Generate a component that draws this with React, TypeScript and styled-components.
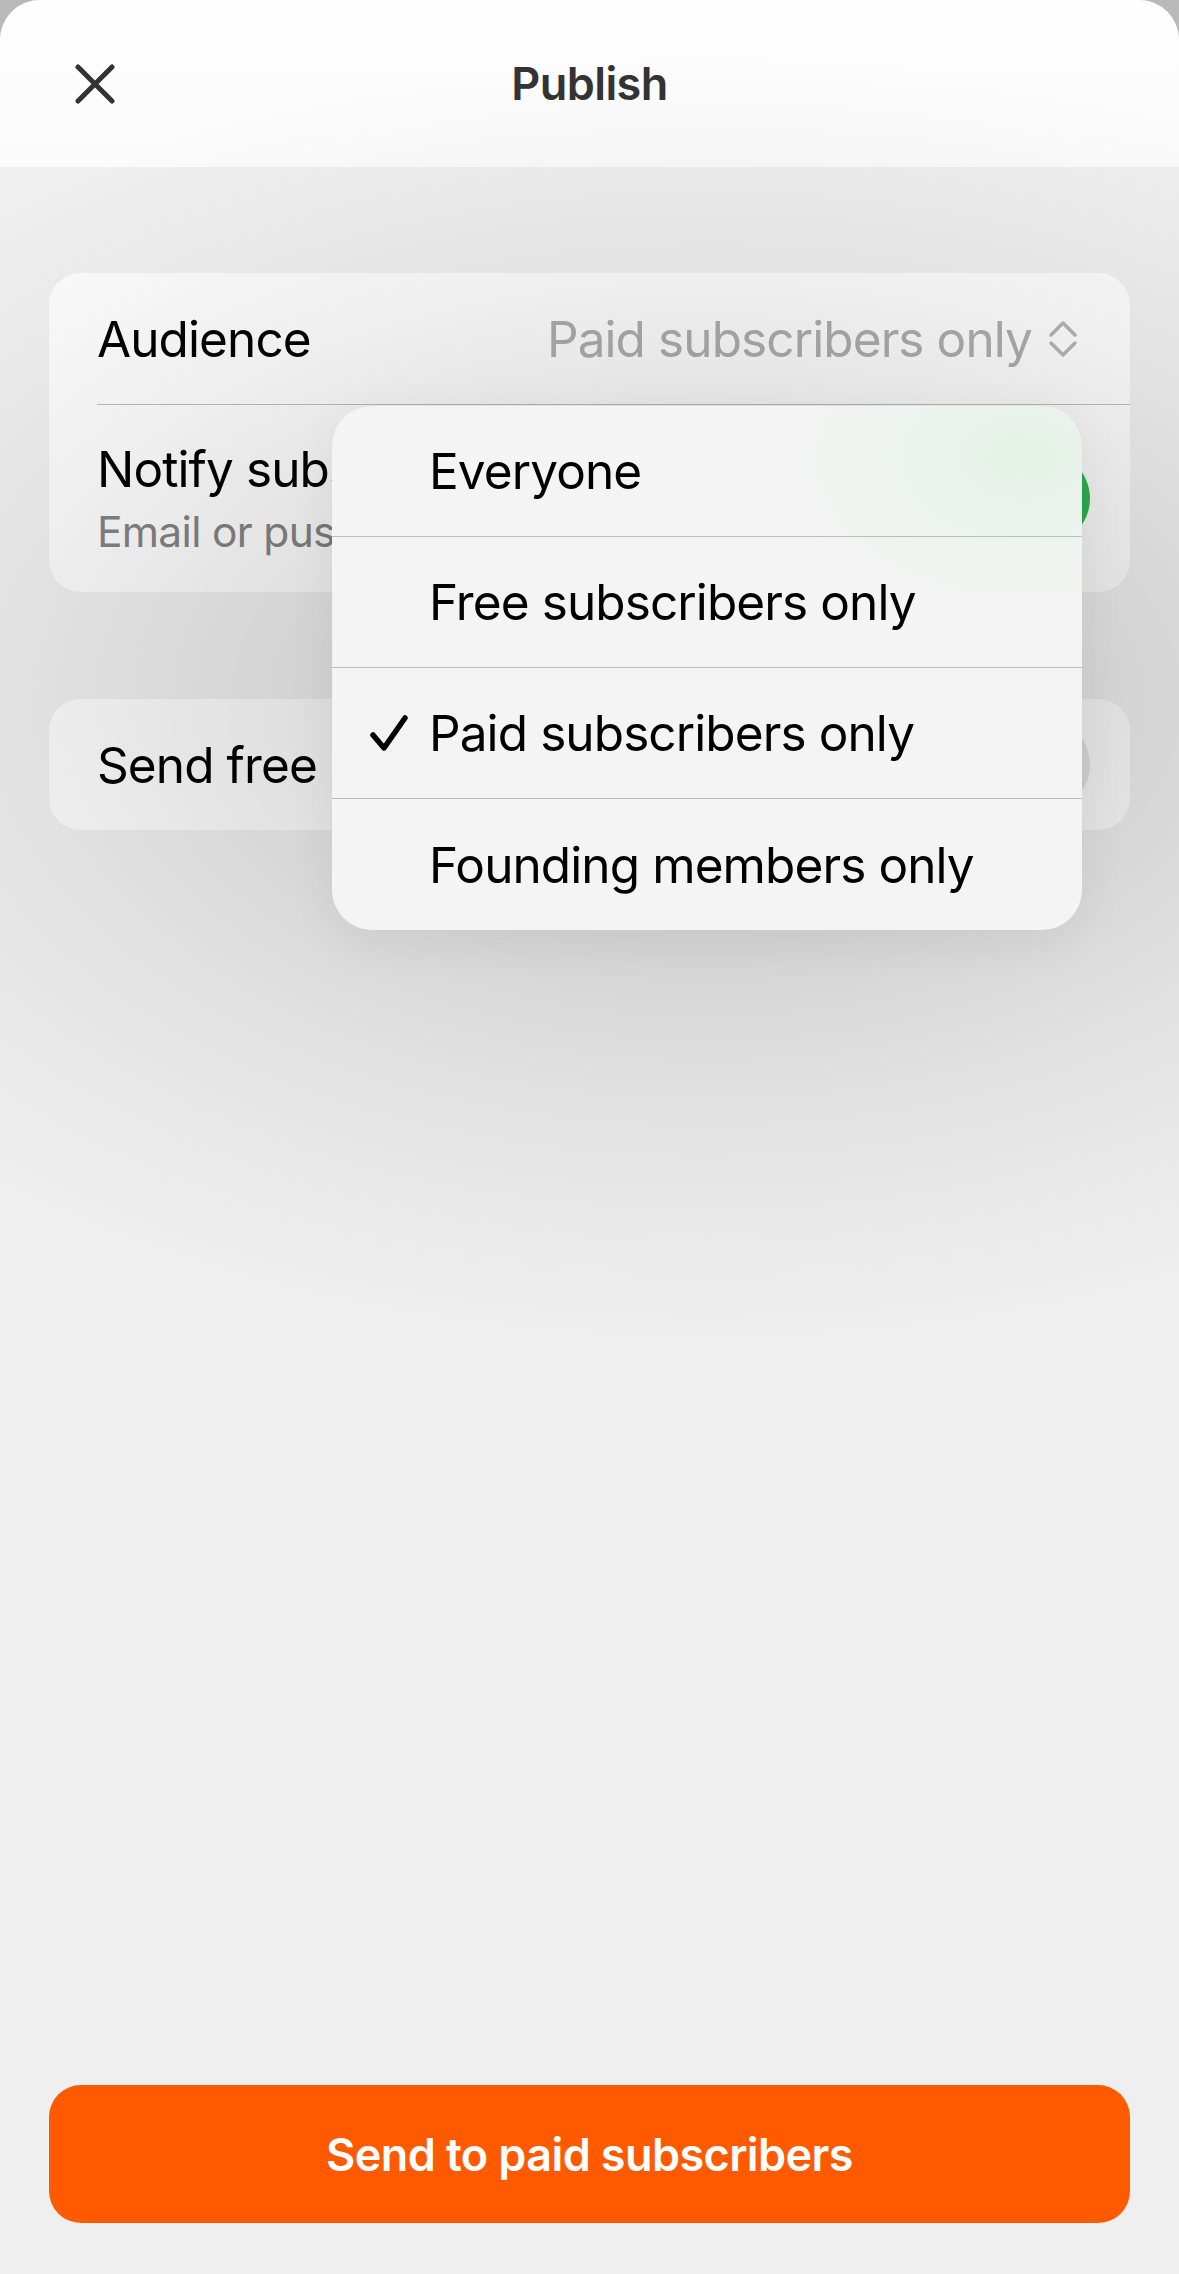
import React from "react";
import styled, { createGlobalStyle } from "styled-components";

const Global = createGlobalStyle`
  html, body { margin: 0; padding: 0; background: #b9b9b9; }
  body {
    font-family: Inter, "Noto Sans", "Liberation Sans", sans-serif;
    -webkit-font-smoothing: antialiased;
  }
  #root { width: 1179px; }
`;

const Sheet = styled.div`
  width: 1179px;
  height: 2274px;
  display: flex;
  flex-direction: column;
  background: #efefef;
  border-radius: 40px 40px 0 0;
  overflow: hidden;
`;

const Header = styled.header`
  height: 167px;
  flex-shrink: 0;
  display: grid;
  grid-template-columns: 1fr auto 1fr;
  align-items: center;
  padding: 0 75px;
  box-sizing: border-box;
  background: linear-gradient(#fefefe, #fbfbfb);
  position: relative;
  z-index: 1;
`;

const CloseButton = styled.button`
  justify-self: start;
  width: 40px;
  height: 40px;
  padding: 0;
  border: 0;
  background: none;
  display: flex;
`;

const Title = styled.h1`
  margin: 0;
  font-size: 45px;
  font-weight: 600;
  color: #333;
  letter-spacing: -0.6px;
`;

const Content = styled.main`
  flex: 1;
  display: flex;
  flex-direction: column;
  gap: 107px;
  padding: 106px 49px 0;
`;

const CardWrap = styled.div`
  position: relative;
  z-index: 2;
`;

const Card = styled.section`
  background: #fcfcfc;
  border-radius: 32px;
  overflow: hidden;
`;

const Row = styled.div<{ $h: number; $pr?: number }>`
  height: ${(p) => p.$h}px;
  display: flex;
  align-items: center;
  justify-content: space-between;
  padding: 0 ${(p) => p.$pr ?? 40}px 0 48px;
  box-sizing: border-box;
`;

const Divider = styled.div`
  height: 1px;
  margin-left: 48px;
  background: #bdbdbd;
`;

const Label = styled.span`
  font-size: 49.5px;
  line-height: 60px;
  color: #000;
  letter-spacing: -0.9px;
`;

const LabelStack = styled.div`
  display: flex;
  flex-direction: column;
  gap: 7px;
`;

const Sub = styled.span`
  font-size: 42.5px;
  line-height: 52px;
  color: #838383;
  letter-spacing: -0.7px;
`;

const Value = styled.div`
  display: flex;
  align-items: center;
  gap: 16px;
  font-size: 49.5px;
  line-height: 60px;
  color: #adadad;
  letter-spacing: -0.9px;
`;

const Switch = styled.div<{ $on: boolean }>`
  width: 153px;
  height: 93px;
  border-radius: 47px;
  background: ${(p) => (p.$on ? "#2fb64f" : "#e4e4e4")};
  flex-shrink: 0;
`;

/* soft elliptical shadow that the floating menu casts over the page */
const MenuShadow = styled.div`
  position: absolute;
  pointer-events: none;
  right: calc(48px + 375px - 1100px);
  top: calc(133px + 294px - 650px);
  width: 2200px;
  height: 1300px;
  background: radial-gradient(
    closest-side,
    rgba(0, 0, 0, 0.13) 0%,
    rgba(0, 0, 0, 0.12) 35%,
    rgba(0, 0, 0, 0.06) 62%,
    rgba(0, 0, 0, 0.02) 85%,
    rgba(0, 0, 0, 0) 100%
  );
`;

const Menu = styled.div`
  position: absolute;
  top: 133px;
  right: 48px;
  width: 750px;
  border-radius: 40px;
  overflow: hidden;
  background:
    radial-gradient(ellipse 240px 160px at 92% 10%, rgba(218, 240, 222, 0.6), rgba(218, 240, 222, 0) 100%),
    #f4f4f4;
  box-shadow: 0 12px 50px rgba(0, 0, 0, 0.06);
`;

const MenuItem = styled.div<{ $last?: boolean }>`
  height: ${(p) => (p.$last ? 131 : 130)}px;
  display: grid;
  grid-template-columns: 97px 1fr;
  align-items: center;
  border-bottom: ${(p) => (p.$last ? "0" : "1px solid #bcbcbc")};
`;

const CheckCell = styled.div`
  padding-left: 38px;
  display: flex;
  align-items: center;
`;

const ItemText = styled.span`
  font-size: 49.5px;
  color: #000;
  letter-spacing: -0.9px;
`;

const Footer = styled.div`
  padding: 0 49px 51px;
`;

const PrimaryButton = styled.button`
  width: 100%;
  height: 138px;
  border: 0;
  border-radius: 32px;
  background: #ff5a00;
  color: #fff;
  font-family: inherit;
  font-size: 45px;
  font-weight: 600;
  letter-spacing: -0.6px;
`;

const CloseIcon = () => (
  <svg width="40" height="40" viewBox="0 0 40 40">
    <path d="M3 3 L37 37 M37 3 L3 37" stroke="#333" strokeWidth="5" strokeLinecap="round" fill="none" />
  </svg>
);

const UpDown = () => (
  <svg width="30" height="38" viewBox="0 0 30 38">
    <path d="M3 15 L15 3 L27 15 M3 23 L15 35 L27 23" stroke="#b3b3b3" strokeWidth="3.5" strokeLinecap="round" strokeLinejoin="round" fill="none" />
  </svg>
);

const Check = () => (
  <svg width="38" height="36" viewBox="0 0 38 36">
    <path d="M3 20 L14 33 L35 3" stroke="#000" strokeWidth="5.5" strokeLinecap="round" strokeLinejoin="round" fill="none" />
  </svg>
);

const options = ["Everyone", "Free subscribers only", "Paid subscribers only", "Founding members only"];

export default function App() {
  const selected = "Paid subscribers only";
  return (
    <>
      <Global />
      <Sheet>
        <Header>
          <CloseButton aria-label="Close">
            <CloseIcon />
          </CloseButton>
          <Title>Publish</Title>
          <span />
        </Header>
        <Content>
          <CardWrap>
            <Card>
              <Row $h={131} $pr={52}>
                <Label>Audience</Label>
                <Value>
                  {selected}
                  <UpDown />
                </Value>
              </Row>
              <Divider />
              <Row $h={187}>
                <LabelStack>
                  <Label>Notify subscribers</Label>
                  <Sub>Email or push notification</Sub>
                </LabelStack>
                <Switch $on />
              </Row>
            </Card>
            <MenuShadow />
            <Menu>
              {options.map((o, i) => (
                <MenuItem key={o} $last={i === options.length - 1}>
                  <CheckCell>{o === selected ? <Check /> : null}</CheckCell>
                  <ItemText>{o}</ItemText>
                </MenuItem>
              ))}
            </Menu>
          </CardWrap>
          <Card>
            <Row $h={131}>
              <Label>Send free preview</Label>
              <Switch $on={false} />
            </Row>
          </Card>
        </Content>
        <Footer>
          <PrimaryButton>Send to paid subscribers</PrimaryButton>
        </Footer>
      </Sheet>
    </>
  );
}
